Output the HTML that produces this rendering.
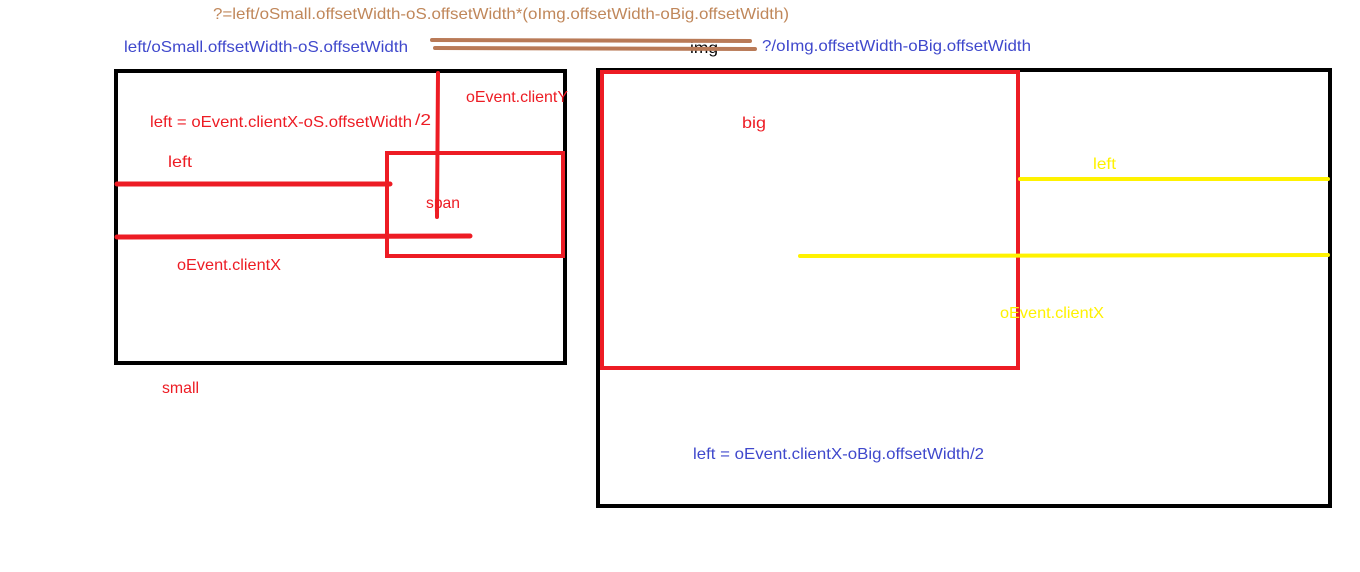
<!DOCTYPE html>
<html><head><meta charset="utf-8"><style>
html,body{margin:0;padding:0;background:#fff;width:1360px;height:572px;overflow:hidden}
svg{display:block}
text{font-family:"Liberation Sans","Noto Sans CJK SC",sans-serif;font-size:16px}
</style></head><body>
<svg width="1360" height="572" xmlns="http://www.w3.org/2000/svg">
<text x="213" y="19" fill="#c0875a" textLength="576" lengthAdjust="spacingAndGlyphs">?=left/oSmall.offsetWidth-oS.offsetWidth*(oImg.offsetWidth-oBig.offsetWidth)</text>
<text x="124" y="52" fill="#3f48cc" textLength="284" lengthAdjust="spacingAndGlyphs">left/oSmall.offsetWidth-oS.offsetWidth</text>
<text x="690" y="53" fill="#000" textLength="28" lengthAdjust="spacingAndGlyphs">img</text>
<line x1="432" y1="40" x2="750" y2="41" stroke="#b97a57" stroke-width="4" stroke-linecap="round"/>
<line x1="435" y1="48" x2="755" y2="49" stroke="#b97a57" stroke-width="4" stroke-linecap="round"/>
<text x="762" y="51" fill="#3f48cc" textLength="269" lengthAdjust="spacingAndGlyphs">?/oImg.offsetWidth-oBig.offsetWidth</text>
<!-- small box -->
<rect x="116" y="71" width="449" height="292" fill="none" stroke="#000" stroke-width="4"/>
<rect x="387" y="153" width="176" height="103" fill="none" stroke="#ed1c24" stroke-width="4"/>
<line x1="438" y1="73" x2="437" y2="217" stroke="#ed1c24" stroke-width="4" stroke-linecap="round"/>
<line x1="117" y1="184" x2="390" y2="184" stroke="#ed1c24" stroke-width="5" stroke-linecap="round"/>
<line x1="117" y1="237" x2="470" y2="236" stroke="#ed1c24" stroke-width="5" stroke-linecap="round"/>
<text x="466" y="102" fill="#ed1c24" textLength="102" lengthAdjust="spacingAndGlyphs">oEvent.clientY</text>
<text x="150" y="127" fill="#ed1c24" textLength="262" lengthAdjust="spacingAndGlyphs">left = oEvent.clientX-oS.offsetWidth</text>
<text x="415" y="125" fill="#ed1c24" textLength="16" lengthAdjust="spacingAndGlyphs">/2</text>
<text x="168" y="167" fill="#ed1c24" textLength="24" lengthAdjust="spacingAndGlyphs">left</text>
<text x="426" y="208" fill="#ed1c24" textLength="34" lengthAdjust="spacingAndGlyphs">span</text>
<text x="177" y="270" fill="#ed1c24" textLength="104" lengthAdjust="spacingAndGlyphs">oEvent.clientX</text>
<text x="162" y="393" fill="#ed1c24" textLength="37" lengthAdjust="spacingAndGlyphs">small</text>
<!-- big box -->
<rect x="598" y="70" width="732" height="436" fill="none" stroke="#000" stroke-width="4"/>
<rect x="602" y="72" width="416" height="296" fill="none" stroke="#ed1c24" stroke-width="4"/>
<text x="742" y="128" fill="#ed1c24" textLength="24" lengthAdjust="spacingAndGlyphs">big</text>
<line x1="1020" y1="179" x2="1328" y2="179" stroke="#fff200" stroke-width="4" stroke-linecap="round"/>
<line x1="800" y1="256" x2="1328" y2="255" stroke="#fff200" stroke-width="4" stroke-linecap="round"/>
<text x="1093" y="169" fill="#fff200" textLength="23" lengthAdjust="spacingAndGlyphs">left</text>
<text x="1000" y="318" fill="#fff200" textLength="104" lengthAdjust="spacingAndGlyphs">oEvent.clientX</text>
<text x="693" y="459" fill="#3f48cc" textLength="291" lengthAdjust="spacingAndGlyphs">left = oEvent.clientX-oBig.offsetWidth/2</text>
</svg>
</body></html>
